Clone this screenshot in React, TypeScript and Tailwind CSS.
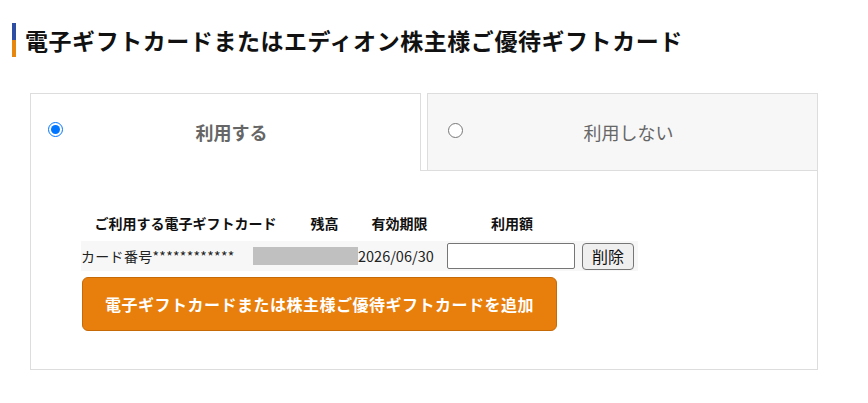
import React, { useState } from 'react';

const font = "font-['Noto_Sans_CJK_JP','Noto_Sans',sans-serif]";

export default function App() {
  const [use, setUse] = useState(true);

  return (
    <div className={`min-h-screen bg-white text-[#222] ${font}`}>
      <div className="flex items-center pt-[23px] pl-[12px]">
        <div className="flex flex-col w-[4px] h-[34px] shrink-0">
          <div className="flex-1 bg-[#2d4ea3]" />
          <div className="flex-1 bg-[#e8870e]" />
        </div>
        <h2 className="ml-[9px] text-[23px] font-bold leading-none tracking-[0.55px] text-[#111]">
          電子ギフトカードまたはエディオン株主様ご優待ギフトカード
        </h2>
      </div>

      <div className="ml-[30px] mt-[36px] w-[788px]">
        <div className="flex items-end">
          <label className="relative flex items-center justify-center w-[391px] h-[78px] border-t border-l border-r border-[#dddddd] bg-white cursor-pointer">
            <input
              type="radio"
              name="gift"
              checked={use}
              onChange={() => setUse(true)}
              className="absolute left-[17px] top-[28px] w-[15px] h-[15px] m-0"
            />
            <span className="pl-[12px] text-[18px] font-bold text-[#666]">利用する</span>
          </label>
          <div className="w-[6px] h-[1px] border-b border-[#dddddd]" />
          <label className="relative flex items-center justify-center w-[391px] h-[78px] border border-[#dddddd] bg-[#f7f7f7] cursor-pointer">
            <input
              type="radio"
              name="gift"
              checked={!use}
              onChange={() => setUse(false)}
              className="absolute left-[20px] top-[29px] w-[15px] h-[15px] m-0"
            />
            <span className="pl-[12px] text-[18px] text-[#666]">利用しない</span>
          </label>
        </div>

        <div className="border-l border-r border-b border-[#dddddd] pt-[37px] pb-[38px] pl-[50px]">
          <div className="flex items-center h-[30px] text-[14px] font-bold text-[#111]">
            <div className="w-[209px] text-center">ご利用する電子ギフトカード</div>
            <div className="w-[69px] text-center">残高</div>
            <div className="w-[81px] text-center">有効期限</div>
            <div className="w-[144px] text-center">利用額</div>
          </div>

          <div className="flex items-center mt-[3px] h-[30px] w-[557px] bg-[#f7f7f7] text-[14px] text-[#222]">
            <span className="w-[172px] shrink-0 whitespace-nowrap tracking-[0.3px]">カード番号************</span>
            <span className="w-[105px] h-[18px] shrink-0 bg-[#c0c0c0]" />
            <span className="w-[89px] shrink-0 text-[14.5px]">2026/06/30</span>
            <input
              type="text"
              className="w-[128px] h-[26px] border border-[#767676] rounded-[2px] bg-white px-1 outline-none"
            />
            <button className="ml-[7px] w-[52px] h-[27px] border border-[#767676] rounded-[4px] bg-[#efefef] text-[16px] leading-none text-[#111]">
              削除
            </button>
          </div>

          <button className="mt-[6px] ml-[1px] flex items-center justify-center w-[475px] h-[54px] rounded-[6px] border border-[#c66a08] bg-[#e87e0c] text-[16px] font-bold tracking-[0.5px] text-white">
            電子ギフトカードまたは株主様ご優待ギフトカードを追加
          </button>
        </div>
      </div>
    </div>
  );
}
